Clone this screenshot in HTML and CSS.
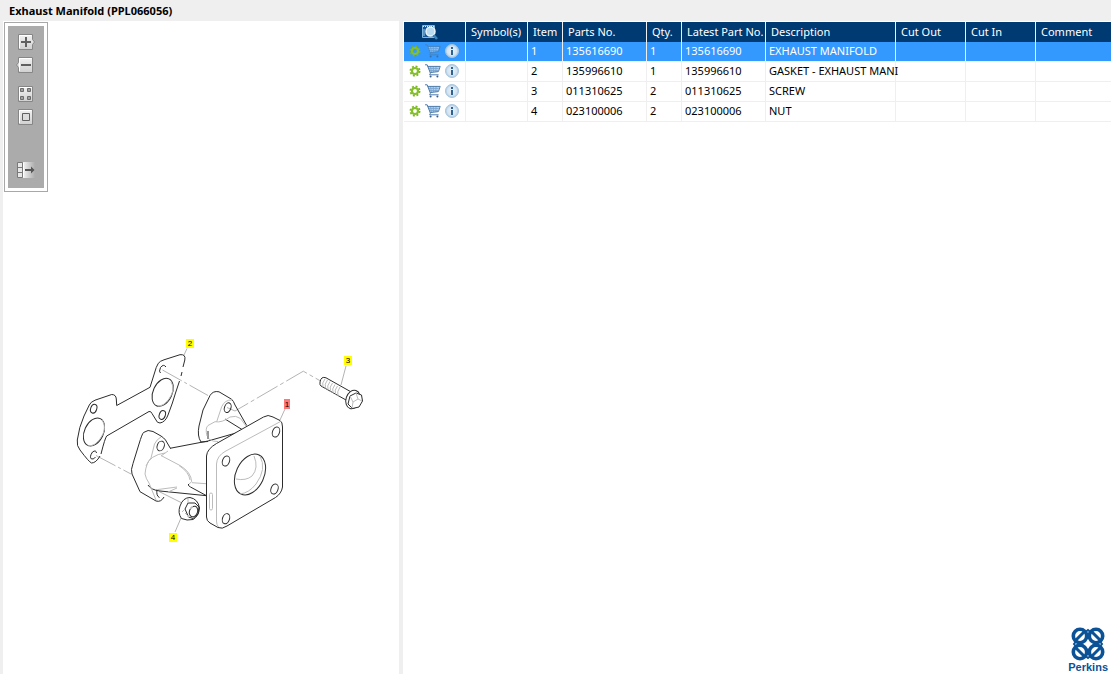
FILE: index.html
```html
<!DOCTYPE html>
<html lang="en">
<head>
<meta charset="utf-8">
<title>Exhaust Manifold (PPL066056)</title>
<link rel="stylesheet" href="styles.css">
</head>
<body>
<svg class="defs" aria-hidden="true">
  <defs>
    <linearGradient id="face" x1="0" y1="0" x2="0" y2="1"><stop offset="0" stop-color="#f2f2f2"/><stop offset="1" stop-color="#d0d0d0"/></linearGradient>
    <linearGradient id="fade" x1="0" y1="0" x2="1" y2="0"><stop offset="0" stop-color="#f4f4f4"/><stop offset="1" stop-color="#ababab"/></linearGradient>
    <radialGradient id="infofill"><stop offset="0" stop-color="#e9f2fa"/><stop offset=".7" stop-color="#d3e4f2"/><stop offset="1" stop-color="#a9c8e2"/></radialGradient>
    <symbol id="gear" viewBox="0 0 12 12">
      <circle cx="6" cy="6" r="4.6" fill="none" stroke="#79b51c" stroke-width="1.8" stroke-dasharray="1.9 1.713"/>
      <circle cx="6" cy="6" r="3" fill="none" stroke="#86bf2c" stroke-width="2.2"/>
    </symbol>
    <symbol id="cart" viewBox="0 0 16 14">
      <path d="M2.5 2.5H14.500L13 7.500L5 8.500Z" fill="#b4d0ea"/>
      <path d="M3 4.500H13.500M4 6.500H13M5.500 2.500L6.500 8M8.200 2.500L8.600 8M11 2.500L10.800 8" stroke="#7aa5cf" stroke-width=".8" fill="none"/>
      <path d="M0 .8H2.200L5.400 9.200L4.600 10.800H13.600M2.600 2.400H15.200L13.400 7.600L5.200 8.600" stroke="#4d7cab" fill="none"/>
      <circle cx="5.600" cy="12.600" r="1" fill="#35618e"/><circle cx="12.400" cy="12.600" r="1" fill="#35618e"/>
    </symbol>
    <symbol id="info" viewBox="0 0 14 14">
      <circle cx="7" cy="7" r="6.500" fill="url(#infofill)" stroke="#a9c6de"/>
      <path d="M6 3h2v2H6zM6 6h2v5H6z" fill="#2f628f"/>
    </symbol>
  </defs>
</svg>

<header class="titlebar"><h1 class="title">Exhaust Manifold (PPL066056)</h1></header>

<main class="workspace">
  <section class="drawing-pane" aria-label="Drawing">
    <div class="toolbar" role="toolbar" aria-label="View tools">
      <button class="tool" aria-label="Zoom in"><svg class="tool-icon" viewBox="0 0 18 16"><path d="M1.5.5h14v5l2 2.5-2 2.5v5h-14z" fill="url(#face)" stroke="#868686"/><path d="M2.500 14V1.500H14.500" fill="none" stroke="#fff"/><path d="M4 8h10M9 3v10" stroke="#606060" stroke-width="2"/></svg></button>
      <button class="tool" aria-label="Zoom out"><svg class="tool-icon" viewBox="0 0 18 16"><path d="M1.500.5h14v15h-14v-5L-.5 8l2-2.500z" fill="url(#face)" stroke="#868686"/><path d="M2.500 14V1.500H14.500" fill="none" stroke="#fff"/><path d="M4 8h10" stroke="#606060" stroke-width="2"/></svg></button>
      <button class="tool tool-group" aria-label="Fit to window"><svg class="tool-icon" viewBox="0 0 18 16"><path d="M1.500.5h14v15h-14z" fill="url(#face)" stroke="#868686"/><path d="M2.500 14V1.500H14.500" fill="none" stroke="#fff"/><path d="M3.500 2.500h3v3h-3zM10.500 2.500h3v3h-3zM3.500 10.500h3v3h-3zM10.500 10.500h3v3h-3z" fill="#a0a0a0" stroke="#6c6c6c"/></svg></button>
      <button class="tool" aria-label="Actual size"><svg class="tool-icon" viewBox="0 0 18 16"><path d="M1.500.5h14v15h-14z" fill="url(#face)" stroke="#868686"/><path d="M2.500 14V1.500H14.500" fill="none" stroke="#fff"/><path d="M5.500 4.500h7v7h-7z" fill="#dcdcdc" stroke="#606060"/></svg></button>
      <button class="tool tool-last" aria-label="Toggle list"><svg class="tool-icon" viewBox="0 0 18 16"><path d="M6 0h12v16H6z" fill="url(#fade)"/><path d="M.5.5h5v15h-5zM.5 5.500h5M.5 10.500h5" fill="#e8e8e8" stroke="#7a7a7a"/><path d="M6.500 1v14" stroke="#fff"/><path d="M8 8h7" stroke="#555" stroke-width="2"/><path d="M14 4.500L17.500 8L14 11.500z" fill="#555"/></svg></button>
    </div>

    <svg class="drawing" viewBox="60 330 310 220" role="img" aria-label="Exploded view of exhaust manifold">
      <g class="axis">
        <path d="M162.500 370L208 395.500" stroke-dasharray="22 3 3 3"/>
        <path d="M96 455.500L131 474" stroke-dasharray="22 3 3 3"/>
        <path d="M227 407.500L235 411L303.300 371.200L320 380.700" stroke-dasharray="24 3 4 3"/>
        <path d="M159 491.500L182 503"/>
        <path d="M187 348.500L184 355M346 366L341 385M285 409L280 420M175 532L181 518"/>
      </g>
      <g class="line">
        <path d="M183 367L184.800 360Q186 354 180 354.700L164 359.800Q160 361 158.300 363.300Q156 367 154.500 373L150 387.300L116.700 405.500L116.300 399Q116 394.500 111.700 394.500L95 400.200Q90.500 402 89.300 405L84 416Q79 427 77.300 440Q76.500 446 80 450Q89 462 91.500 463Q96 463 100 456M101 454Q105 438 106.700 436L149 411.500Q151 411 152 413.500L156 420Q157 423 160 423Q165.500 422 168 415Q173 402 175.500 393L179.500 381M182 372L181 376"/>
        <ellipse cx="162.700" cy="392.300" rx="9.500" ry="14.800" transform="rotate(25 162.700 392.300)"/>
        <ellipse cx="94" cy="432" rx="9.500" ry="14.800" transform="rotate(25 94 432)"/>
        <path d="M160.500 373Q158.500 372 160.500 367.500Q163.500 363.500 166 367"/>
        <ellipse cx="162.300" cy="415" rx="3" ry="4.500" transform="rotate(20 162.300 415)"/>
        <ellipse cx="93.700" cy="408.700" rx="3" ry="4.500" transform="rotate(20 93.700 408.700)"/>
        <path d="M96.500 453Q96 449.500 92.500 452Q89 457 91.500 459Q94 459.500 95.500 457"/>
      </g>
      <g class="soft">
        <path d="M171 382Q176 389 169 399Q164 406 158 406"/>
        <path d="M102 420Q108 428 100 439Q95 446 88 446"/>
      </g>

      <g class="line">
        <path d="M208 441.500L201 442Q197 436 199 426L203 410L210 395.500Q213 390.500 219 391.800L231.700 399.300Q233.500 401 235 405L246.700 425.500M225 419L242 429.500"/>
        <ellipse cx="227.700" cy="407.700" rx="3.200" ry="5" transform="rotate(20 227.700 407.700)"/>
        <path d="M170 448.300L208 441L236 433M208 431V439"/>
        <path d="M170.500 448.500L165.500 440Q164 438 161 436L153 431.500Q148 429 143.500 432.500Q142 434 139 444L133 463.500Q130.500 470 132 474L140 491.700L156 501Q161 502.500 164 497"/>
        <ellipse cx="160.700" cy="446" rx="3.500" ry="5" transform="rotate(20 160.700 446)"/>
        <path d="M157 489.500Q156 496 159.500 497.500M148 485Q151 490 160 491L206.500 495.700M206.500 495.700L190.500 487Q187.500 485.500 188.500 484"/>
      </g>
      <g class="soft">
        <path d="M216.700 421.700L221.700 406.700Q225 399.500 232 400M207 436Q205 428 208 425.500L215 421.700Q222 423 230 417Q236 415 240.500 418.500L246 426M209 439Q213 442 218 441.500"/>
        <path d="M168 451L161 456M161 437Q157 439 154.500 444L151 458Q146 463 145 474Q146 479 149 483L156 500M146 466Q150 455 165 453"/>
        <path d="M161 455.500L180 465.500Q191 472 191.700 481.700L189 484M179 465.500Q189 472 190 480M192 482.700L206 483.700M158 489.500L177 487M168 492L177 488"/>
      </g>

      <g class="line">
        <path class="solid" d="M206.500 456Q207 449 216.500 443.500L263.500 417Q268 414 273 417L280 420.500Q282.500 422 282.500 427V487Q281.500 493.500 275.500 497.500L227 526Q222 529.500 218 527.500L210 523Q206.500 521 206.500 517Z"/>
        <ellipse cx="226" cy="461" rx="3.500" ry="5.200" transform="rotate(20 226 461)"/>
        <ellipse cx="276" cy="432" rx="3.500" ry="5.200" transform="rotate(20 276 432)"/>
        <ellipse cx="226" cy="518.700" rx="3.500" ry="5.200" transform="rotate(20 226 518.700)"/>
        <ellipse cx="274.500" cy="489" rx="3.500" ry="5.200" transform="rotate(20 274.500 489)"/>
        <ellipse cx="250" cy="474.500" rx="14" ry="21.500" transform="rotate(25 250 474.500)"/>
      </g>
      <g class="soft">
        <path d="M218.500 527Q216.500 525 216.500 521V464Q217 456 225 451.500L280.500 421.500"/>
        <path d="M260 456Q267 469 256 484Q249 493 240 494M254 456Q259 468 252 476Q246 481 236 479"/>
        <rect x="209.500" y="493" width="3" height="17" rx="1.500"/>
      </g>

      <g class="line">
        <path class="solid" d="M350.700 391.700L326 377.800Q321 376 320 382Q319.500 385 321 386L346 400"/>
        <ellipse class="solid" cx="353" cy="399.500" rx="7" ry="9.500" transform="rotate(18 353 399.500)"/>
        <path class="solid" d="M350 396L356 393L361.500 395L362.500 401L359 407L352.500 408.500L348 404Z"/>
        <path class="solid" d="M181.500 518.500Q177.500 513 180 506Q183 497.500 190 497.500Q198 499 199.500 508Q199 516 193 519.500Q187 521 181.500 518.500Z"/>
        <path d="M185 509L188 503L195 503L199 507L198 514L193 518.500L188.500 517Z"/>
        <ellipse cx="193.500" cy="511.500" rx="4" ry="5.500" transform="rotate(20 193.500 511.500)"/>
      </g>
      <g class="soft">
        <path d="M325 379Q321.500 383 323 387M327.500 380Q324 384 325.500 388.500M330 381.500Q326.500 386 328 390M332.500 383Q329 387 330.500 391.500M335 384.500Q331.500 389 333 393M337.500 386Q334 390 335.500 394.500M340 387Q336.500 392 338 396"/>
        <path d="M353 402L358 399L362 401M353 402L352 408M350 396L353 402M358 399L356 393"/>
        <path d="M185 509L182 512M188 503V499M189 517L185 513M190 509L193 506"/>
      </g>
      <g class="callouts">
        <rect class="mark" x="186" y="339" width="8" height="9"/><text x="190" y="346">2</text>
        <rect class="mark" x="344" y="356" width="8" height="9"/><text x="348" y="363">3</text>
        <rect class="mark active" x="284" y="399" width="6" height="10"/><text x="287" y="407">1</text>
        <rect class="mark" x="169" y="533" width="8" height="9"/><text x="173" y="540">4</text>
      </g>
    </svg>
  </section>

  <section class="parts-pane" aria-label="Parts list">
    <table class="parts">
      <colgroup><col class="w-wide"><col class="w-wide"><col class="w-tiny"><col class="w-part"><col class="w-tiny"><col class="w-part"><col class="w-desc"><col class="w-cut"><col class="w-cut"><col></colgroup>
      <thead>
        <tr>
          <th class="search"><button class="icon-button" aria-label="Search list"><svg class="search-icon" viewBox="0 0 17 16"><path d="M.5 1.500h12v12H.5z" fill="#15589a" stroke="#7fb6dd"/><path d="M1 2.500h11" stroke="#d9ecf8" stroke-dasharray="1 1"/><path d="M2 5v7" stroke="#9cc9e8"/><circle cx="8.500" cy="7.500" r="4.500" fill="#b9dcf0" stroke="#eef6fb" stroke-width="1.500"/><path d="M11.500 11L15 15" stroke="#3b85bd" stroke-width="2.500"/></svg></button></th>
          <th>Symbol(s)</th><th>Item</th><th>Parts No.</th><th>Qty.</th><th>Latest Part No.</th><th>Description</th><th>Cut Out</th><th>Cut In</th><th>Comment</th>
        </tr>
      </thead>
      <tbody>
        <tr class="selected">
          <td><div class="actions"><button class="icon-button" aria-label="Options"><svg class="gear"><use href="#gear"/></svg></button><button class="icon-button" aria-label="Add to cart"><svg class="cart"><use href="#cart"/></svg></button><button class="icon-button" aria-label="Information"><svg class="info"><use href="#info"/></svg></button></div></td>
          <td></td><td>1</td><td>135616690</td><td>1</td><td>135616690</td><td>EXHAUST MANIFOLD</td><td></td><td></td><td></td>
        </tr>
        <tr>
          <td><div class="actions"><button class="icon-button" aria-label="Options"><svg class="gear"><use href="#gear"/></svg></button><button class="icon-button" aria-label="Add to cart"><svg class="cart"><use href="#cart"/></svg></button><button class="icon-button" aria-label="Information"><svg class="info"><use href="#info"/></svg></button></div></td>
          <td></td><td>2</td><td>135996610</td><td>1</td><td>135996610</td><td>GASKET - EXHAUST MANI</td><td></td><td></td><td></td>
        </tr>
        <tr>
          <td><div class="actions"><button class="icon-button" aria-label="Options"><svg class="gear"><use href="#gear"/></svg></button><button class="icon-button" aria-label="Add to cart"><svg class="cart"><use href="#cart"/></svg></button><button class="icon-button" aria-label="Information"><svg class="info"><use href="#info"/></svg></button></div></td>
          <td></td><td>3</td><td>011310625</td><td>2</td><td>011310625</td><td>SCREW</td><td></td><td></td><td></td>
        </tr>
        <tr>
          <td><div class="actions"><button class="icon-button" aria-label="Options"><svg class="gear"><use href="#gear"/></svg></button><button class="icon-button" aria-label="Add to cart"><svg class="cart"><use href="#cart"/></svg></button><button class="icon-button" aria-label="Information"><svg class="info"><use href="#info"/></svg></button></div></td>
          <td></td><td>4</td><td>023100006</td><td>2</td><td>023100006</td><td>NUT</td><td></td><td></td><td></td>
        </tr>
      </tbody>
    </table>
    <div class="brand">
      <svg class="brand-mark" viewBox="0 0 34 34" aria-hidden="true">
        <g fill="none" stroke="#0b5296" stroke-width="3.600">
          <circle cx="9" cy="9" r="6.700"/><circle cx="25" cy="9" r="6.700"/><circle cx="9" cy="25" r="6.700"/><circle cx="25" cy="25" r="6.700"/>
          <path d="M4.500 13.500L13.500 4.500M29.500 13.500L20.500 4.500M4.500 20.500L13.500 29.500M29.500 20.500L20.500 29.500" stroke-width="3"/>
          <path d="M14.500 5L17 3L19.500 5M14.500 29L17 31L19.500 29M5 14.500L3 17L5 19.500M29 14.500L31 17L29 19.500" stroke-width="2"/>
        </g>
      </svg>
      <span class="brand-name">Perkins</span>
    </div>
  </section>
</main>
</body>
</html>
```
FILE: styles.css
```css
* { box-sizing: border-box; }
body {
  margin: 0;
  min-height: 100vh;
  display: flex;
  flex-direction: column;
  background: #efefef;
  color: #000;
  font-family: "Noto Sans", "Open Sans", sans-serif;
  font-size: 11px;
}
button { padding: 0; border: 0; background: none; display: block; }
svg { display: block; overflow: visible; }
.defs { position: absolute; width: 0; height: 0; }

.titlebar { padding-left: 9px; }
.title { margin: 0; font-size: 11px; line-height: 21px; font-weight: 700; }

.workspace {
  flex: 1;
  display: grid;
  grid-template-columns: 33fr 59fr;
  column-gap: 4px;
  padding-left: 3px;
}
.drawing-pane {
  background: #fff;
  padding: 1px;
  display: flex;
  flex-direction: column;
  align-items: flex-start;
}
.toolbar {
  width: 44px;
  padding: 11px 0 13px 12px;
  border: 1px solid #a8a8a8;
  outline: 3px solid #fff;
  outline-offset: -4px;
  background: #ababab;
}
.tool { margin-bottom: 7px; }
.tool-group { margin-top: 13px; }
.tool-last { margin: 37px 0 0; }
.tool-icon { width: 18px; height: 16px; }
.drawing { width: 310px; height: 220px; margin: 138px 0 0 56px; }
.axis { fill: none; stroke: #b4b4b4; }
.line { fill: none; stroke: #2c2c2c; }
.soft { fill: none; stroke: #bcbcbc; }
.solid { fill: #fff; }
.mark { fill: #ff0; }
.active { fill: #f77; }
.callouts { font: 8px "Liberation Sans", sans-serif; text-anchor: middle; }

.parts-pane { position: relative; background: #fff; padding: 1px 0 0 1px; min-width: 0; }
.parts { width: 100%; table-layout: fixed; border-collapse: separate; border-spacing: 0; }
.w-wide { width: 62px; }
.w-tiny { width: 35px; }
.w-part { width: 84px; }
.w-desc { width: 130px; }
.w-cut { width: 70px; }
.parts th, .parts td {
  height: 20px;
  border-right: 1px solid #efefef;
  text-align: left;
  white-space: nowrap;
}
.parts th {
  padding: 0 0 0 5px;
  background: #003a73;
  color: #fff;
  font-weight: 400;
  line-height: 20px;
}
.parts td { padding: 0 0 2px 3px; border-bottom: 1px solid #efefef; line-height: 17px; }
.parts th:last-child, .parts td:last-child { border-right: 0; }
.parts .search { padding-left: 18px; }
.selected td { background: #3399ff; color: #fff; }
.search-icon { width: 17px; height: 16px; }
.actions { display: flex; align-items: center; gap: 4px; padding-left: 2px; height: 17px; }
.gear { width: 12px; height: 12px; }
.cart { width: 16px; height: 14px; }
.info { width: 14px; height: 14px; }
.selected .cart { opacity: .7; }

.brand {
  position: absolute;
  right: 3px;
  bottom: 1px;
  display: flex;
  flex-direction: column;
  align-items: center;
  color: #0b5296;
}
.brand-mark { width: 34px; height: 34px; }
.brand-name { font: 700 11px/12px "Liberation Sans", sans-serif; }
```
